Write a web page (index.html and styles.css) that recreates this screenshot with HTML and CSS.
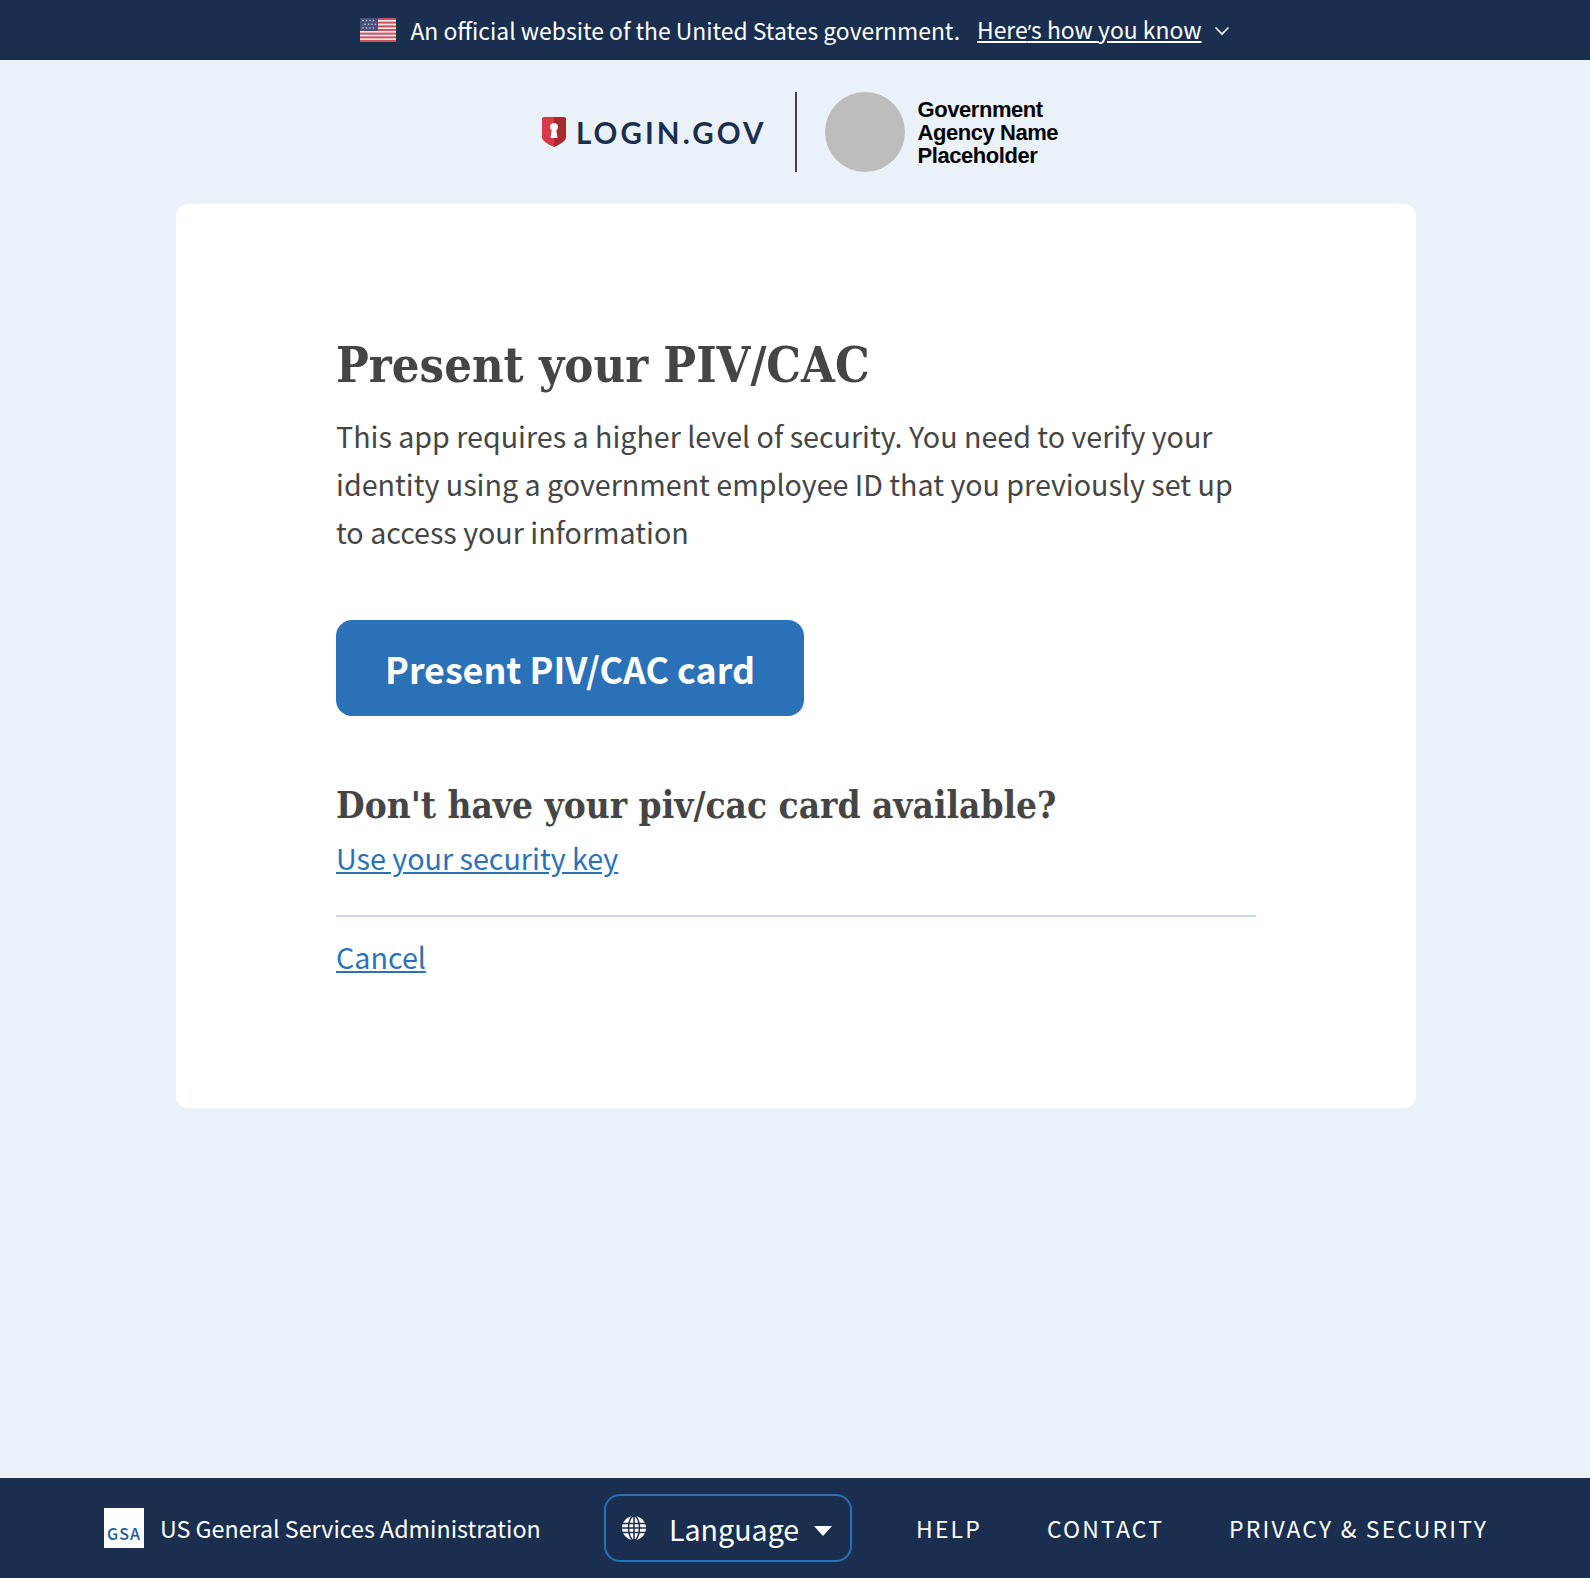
FILE: index.html
```html
<!DOCTYPE html>
<html lang="en">
<head>
<meta charset="utf-8">
<title>Present your PIV/CAC</title>
<link rel="stylesheet" href="styles.css">
</head>
<body>
<div class="page">
  <div class="gov-banner">
    <svg class="flag" width="36" height="24" viewBox="0 0 36 24" aria-hidden="true">
      <rect width="36" height="24" fill="#f4e4e6"/>
      <g fill="#c9505f"><rect y="0" width="36" height="2"/><rect y="3.700" width="36" height="1.900"/><rect y="7.400" width="36" height="1.900"/><rect y="11" width="36" height="1.900"/><rect y="14.700" width="36" height="1.900"/><rect y="18.400" width="36" height="1.900"/><rect y="22" width="36" height="2"/></g>
      <rect width="18" height="13" fill="#4a4f7c"/>
      <g fill="#d5d7e4"><circle cx="3" cy="2.500" r=".8"/><circle cx="6.500" cy="2.500" r=".8"/><circle cx="10" cy="2.500" r=".8"/><circle cx="13.500" cy="2.500" r=".8"/><circle cx="5" cy="6.200" r=".8"/><circle cx="8.500" cy="6.200" r=".8"/><circle cx="12" cy="6.200" r=".8"/><circle cx="15.500" cy="6.200" r=".8"/><circle cx="3" cy="10" r=".8"/><circle cx="6.500" cy="10" r=".8"/><circle cx="10" cy="10" r=".8"/><circle cx="13.500" cy="10" r=".8"/></g>
    </svg>
    <span class="gov-text">An official website of the United States government.</span>
    <a class="gov-link" href="#">Here<span class="apos">’</span>s how you know</a>
    <svg class="chev" width="16" height="10" viewBox="0 0 16 10" aria-hidden="true"><path d="M1.500 1.500 8 8l6.500-6.500" fill="none" stroke="#fff" stroke-width="1.600"/></svg>
  </div>

  <header class="brand">
    <div class="login-logo">
      <svg class="shield" width="24" height="30" viewBox="0 0 24 30" aria-hidden="true">
        <path d="M2 0h10v30Q5 27 1.500 23.500 0 22 0 20V2Q0 0 2 0Z" fill="#d83a48"/>
        <path d="M12 0h10q2 0 2 2v18q0 2-1.500 3.500Q19 27 12 30Z" fill="#a82a2c"/>
        <path d="M12 6a4 4 0 0 1 2.300 7.300L15.500 21h-7l1.200-7.700A4 4 0 0 1 12 6Z" fill="#fff"/>
      </svg>
      <span class="login-word">LOGIN.GOV</span>
    </div>
    <div class="brand-rule"></div>
    <div class="agency-dot"></div>
    <div class="agency-name">Government<br>Agency Name<br>Placeholder</div>
  </header>

  <main class="card">
    <h1 class="title">Present your PIV/CAC</h1>
    <p class="lead">This app requires a higher level of security. You need to verify your identity using a government employee ID that you previously set up to access your information</p>
    <a class="btn" href="#">Present PIV/CAC card</a>
    <h2 class="sub">Don't have your piv/cac card available?</h2>
    <a class="link key-link" href="#">Use your security key</a>
    <hr class="rule">
    <a class="link" href="#">Cancel</a>
  </main>

  <footer class="footer">
    <div class="gsa">
      <svg class="gsa-logo" width="40" height="40" viewBox="0 0 40 40" aria-hidden="true">
        <rect width="40" height="40" fill="#fff"/>
        <text x="3" y="32" class="gsa-mark">GSA</text>
      </svg>
      <span class="gsa-name">US General Services Administration</span>
    </div>
    <button class="lang" type="button">
      <svg class="lang-icon" width="24" height="24" viewBox="0 0 24 24" aria-hidden="true">
        <circle cx="12" cy="12" r="12" fill="#fff"/>
        <g fill="none" stroke="#1a2f4f" stroke-width="1.500">
          <ellipse cx="12" cy="12" rx="5.500" ry="12"/>
          <path d="M12 0v24M0 7.500h24M0 12h24M0 16.500h24"/>
        </g>
      </svg>
      <span class="lang-label">Language</span>
      <svg class="lang-icon caret" width="18" height="10" viewBox="0 0 18 10" aria-hidden="true"><path d="M0 0h18L9 10Z" fill="#fff"/></svg>
    </button>
    <nav class="foot-nav">
      <a href="#">HELP</a>
      <a href="#">CONTACT</a>
      <a href="#">PRIVACY &amp; SECURITY</a>
    </nav>
  </footer>
</div>
</body>
</html>
```
FILE: styles.css
```css
* { box-sizing: border-box; }
html, body { margin: 0; padding: 0; }
body {
  font-family: "Noto Sans CJK SC", "Noto Sans", sans-serif;
  font-feature-settings: "palt" 1;
  background: #eaf1f8;
  color: #454545;
}
.page {
  min-height: 1578px;
  display: flex;
  flex-direction: column;
}
.gov-banner {
  height: 60px;
  background: #1a2f4f;
  color: #fff;
  display: flex;
  align-items: center;
  justify-content: center;
  font-size: 22.900px;
  line-height: 32px;
  white-space: nowrap;
}
.flag { margin-right: 14px; flex: none; }
.gov-text { margin-right: 17px; }
.gov-link { color: #fff; text-decoration: underline; margin-right: 12px; }
.apos { font-family: "Open Sans", sans-serif; font-size: 20px; }
.chev { margin-top: 1px; flex: none; }
.brand {
  height: 144px;
  display: flex;
  align-items: center;
  justify-content: center;
  padding-left: 10px;
}
.login-logo { display: flex; align-items: center; gap: 10px; }
.shield { display: block; }
.login-word {
  font-family: Lato, sans-serif;
  font-weight: 700;
  font-size: 29.500px;
  letter-spacing: 3.100px;
  color: #1a2f4f;
}
.brand-rule { width: 2px; height: 80px; background: #454545; margin: 0 28px; }
.agency-dot { width: 80px; height: 80px; border-radius: 50%; background: #bdbdbd; margin-right: 13px; }
.agency-name {
  font-family: "Liberation Sans", Arial, sans-serif;
  font-weight: 700;
  font-size: 22px;
  letter-spacing: -0.450px;
  line-height: 23px;
  color: #000;
}
.card {
  width: 1240px;
  height: 904px;
  margin: 0 0 0 176px;
  background: #fff;
  border-radius: 12px;
  padding: 129px 160px 0;
  display: flex;
  flex-direction: column;
  align-items: flex-start;
}
.title {
  margin: 0 0 15px;
  font-family: "DejaVu Serif", serif;
  font-stretch: condensed;
  font-weight: 700;
  font-size: 48.500px;
  line-height: 64px;
  color: #454545;
}
.lead {
  margin: 0 0 64px;
  font-size: 28.650px;
  line-height: 48px;
  color: #454545;
}
.btn {
  width: 468px;
  height: 96px;
  background: #2b71b8;
  color: #fff;
  border-radius: 16px;
  display: flex;
  align-items: center;
  justify-content: center;
  font-weight: 700;
  font-size: 35.800px;
  text-decoration: none;
}
.sub {
  margin: 62px 0 0;
  font-family: "DejaVu Serif", serif;
  font-stretch: condensed;
  font-weight: 700;
  font-size: 36.700px;
  line-height: 56px;
  color: #454545;
}
.link {
  font-size: 28.700px;
  line-height: 48px;
  color: #2b71b8;
  text-decoration: underline;
}
.rule {
  width: 100%;
  height: 2px;
  margin: 33px 0 16px;
  border: 0;
  background: #c6d6e8;
}
.footer {
  margin-top: auto;
  height: 100px;
  background: #1a2f4f;
  color: #fff;
  display: flex;
  align-items: center;
  padding: 0 104px;
  white-space: nowrap;
}
.gsa { display: flex; align-items: center; gap: 16px; width: 500px; flex: none; }
.gsa-logo { display: block; flex: none; }
.gsa-mark { font-family: "Noto Sans CJK SC", sans-serif; font-size: 16px; font-weight: 500; letter-spacing: 1px; fill: #1e5a96; }
.gsa-name { font-size: 23.250px; }
.lang {
  width: 248px;
  height: 68px;
  flex: none;
  display: flex;
  align-items: center;
  padding: 0 16px;
  background: transparent;
  border: 2px solid #2b71b8;
  border-radius: 16px;
  color: #fff;
  font: inherit;
}
.lang-icon { flex: none; }
.caret { margin-top: 6px; }
.lang-label { font-size: 28.600px; margin: 0 15px 0 23px; }
.foot-nav { display: flex; gap: 65px; margin-left: 64px; font-size: 23px; letter-spacing: 2.150px; }
.foot-nav a { color: #fff; text-decoration: none; }
```
